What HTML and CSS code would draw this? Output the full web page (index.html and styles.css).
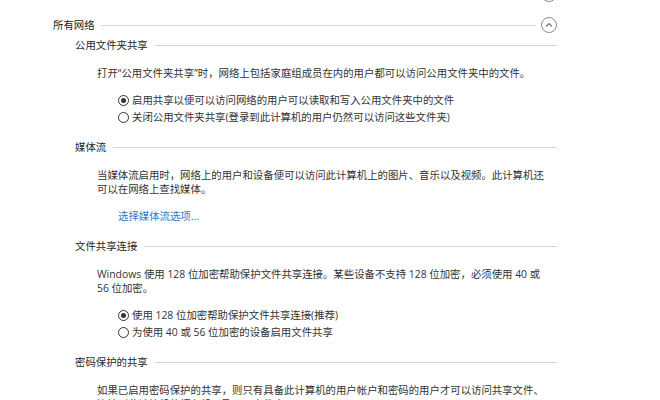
FILE: index.html
```html
<!DOCTYPE html>
<html lang="zh-CN">
<head>
    <meta charset="UTF-8">
    <title>高级共享设置</title>
    <link rel="stylesheet" href="styles.css">
</head>
<body>
    <div class="panel">
        <div class="group-head group-head-prev">
            <span class="rule"></span>
            <span class="toggle">
                <svg viewBox="0 0 16 16" width="16" height="16"><path d="M5 6.5 L8 9.5 L11 6.5" /></svg>
            </span>
        </div>

        <div class="group-head">
            <span class="group-title">所有网络</span>
            <span class="rule"></span>
            <span class="toggle">
                <svg viewBox="0 0 16 16" width="16" height="16"><path d="M5 9.5 L8 6.5 L11 9.5" /></svg>
            </span>
        </div>

        <div class="section">
            <div class="section-head">
                <span class="section-title">公用文件夹共享</span>
                <span class="rule"></span>
            </div>
            <div class="section-body">
                <p class="desc">打开“公用文件夹共享”时，网络上包括家庭组成员在内的用户都可以访问公用文件夹中的文件。</p>
                <div class="options">
                    <label class="option"><span class="radio checked"></span>启用共享以便可以访问网络的用户可以读取和写入公用文件夹中的文件</label>
                    <label class="option"><span class="radio"></span>关闭公用文件夹共享(登录到此计算机的用户仍然可以访问这些文件夹)</label>
                </div>
            </div>
        </div>

        <div class="section">
            <div class="section-head">
                <span class="section-title">媒体流</span>
                <span class="rule"></span>
            </div>
            <div class="section-body">
                <p class="desc">当媒体流启用时，网络上的用户和设备便可以访问此计算机上的图片、音乐以及视频。此计算机还可以在网络上查找媒体。</p>
                <div class="options">
                    <a class="link" href="#">选择媒体流选项...</a>
                </div>
            </div>
        </div>

        <div class="section">
            <div class="section-head">
                <span class="section-title">文件共享连接</span>
                <span class="rule"></span>
            </div>
            <div class="section-body">
                <p class="desc">Windows 使用 128 位加密帮助保护文件共享连接。某些设备不支持 128 位加密，必须使用 40 或 56 位加密。</p>
                <div class="options">
                    <label class="option"><span class="radio checked"></span>使用 128 位加密帮助保护文件共享连接(推荐)</label>
                    <label class="option"><span class="radio"></span>为使用 40 或 56 位加密的设备启用文件共享</label>
                </div>
            </div>
        </div>

        <div class="section">
            <div class="section-head">
                <span class="section-title">密码保护的共享</span>
                <span class="rule"></span>
            </div>
            <div class="section-body">
                <p class="desc">如果已启用密码保护的共享，则只有具备此计算机的用户帐户和密码的用户才可以访问共享文件、连接到此计算机的打印机以及公用文件夹。</p>
            </div>
        </div>
    </div>
</body>
</html>
```

FILE: styles.css
```css
* {
    margin: 0;
    padding: 0;
    box-sizing: border-box;
}

body {
    background-color: #ffffff;
    font-family: "Open Sans", "Noto Sans CJK SC", sans-serif;
    font-size: 10.4px;
    color: #333333;
    overflow: hidden;
}

.panel {
    width: 504px;
    margin-left: 53px;
    margin-top: -14px;
}

.group-head {
    display: flex;
    align-items: center;
    height: 16px;
    margin-bottom: 15px;
}

.group-head + .group-head {
    margin-bottom: 4px;
}

.group-title {
    color: #1a1a1a;
    line-height: 16px;
    white-space: nowrap;
}

.rule {
    flex: 1;
    height: 1px;
    background-color: #d6d6d6;
    margin-left: 7px;
}

.group-head .rule {
    margin-left: 6px;
}

.group-head-prev .rule {
    margin-left: 0;
}

.toggle {
    width: 16px;
    height: 16px;
    margin-left: 5px;
    border: 1px solid #8c8c8c;
    border-radius: 50%;
    display: flex;
    align-items: center;
    justify-content: center;
}

.toggle svg {
    display: block;
    margin: -1px;
}

.toggle path {
    fill: none;
    stroke: #6e6e6e;
    stroke-width: 1.1;
}

.section {
    padding-left: 22px;
    margin-bottom: 14px;
}

.section-head {
    display: flex;
    align-items: center;
    height: 16px;
    margin-bottom: 13px;
}

.section-title {
    color: #262626;
    line-height: 16px;
    white-space: nowrap;
}

.section-body {
    padding-left: 22px;
    padding-right: 12px;
}

.desc {
    line-height: 14px;
}

.options {
    padding-left: 21px;
    margin-top: 12px;
    display: flex;
    flex-direction: column;
    gap: 1px;
}

.option {
    display: flex;
    align-items: center;
    line-height: 16px;
    white-space: nowrap;
}

.radio {
    width: 11px;
    height: 11px;
    border: 1px solid #333333;
    border-radius: 50%;
    margin-right: 3px;
    display: flex;
    align-items: center;
    justify-content: center;
    flex-shrink: 0;
}

.radio.checked::after {
    content: "";
    width: 5px;
    height: 5px;
    border-radius: 50%;
    background-color: #333333;
}

.link {
    color: #2f78cc;
    text-decoration: none;
    line-height: 16px;
}
```
